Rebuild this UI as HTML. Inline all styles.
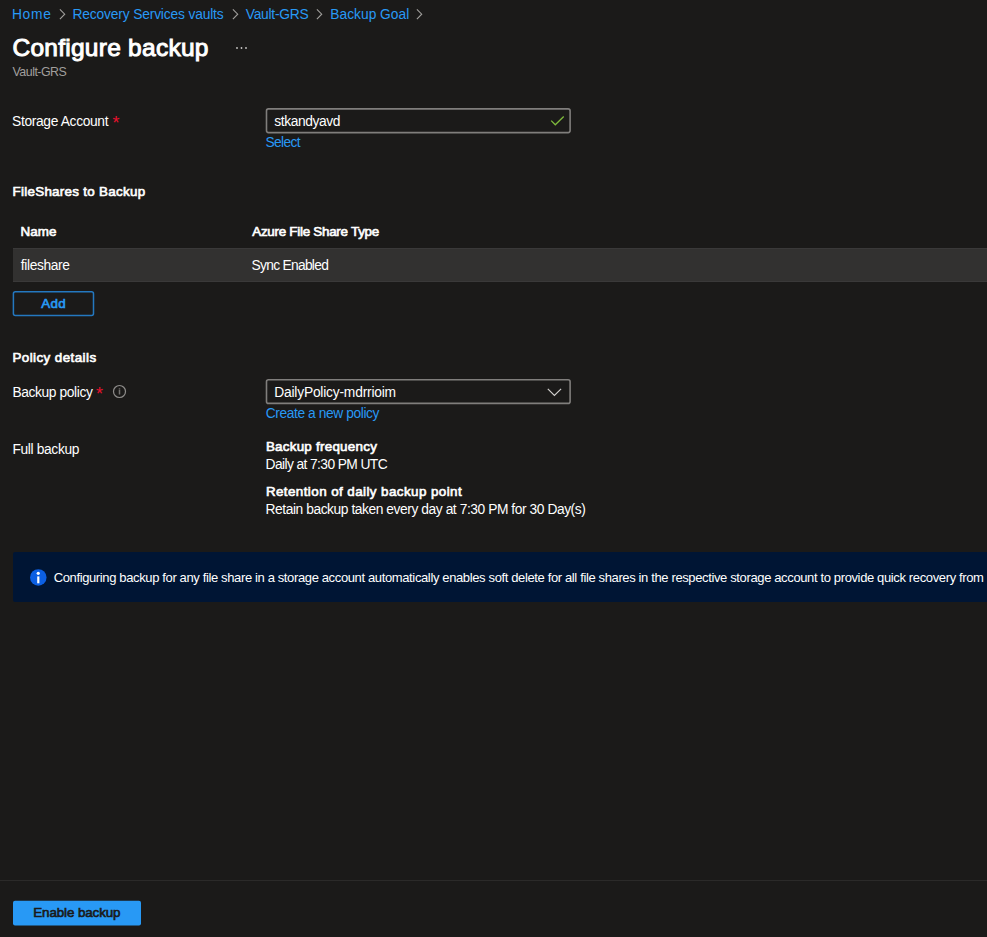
<!DOCTYPE html>
<html lang="en">
<head>
<meta charset="utf-8">
<title>Configure backup</title>
<style>
html,body{margin:0;padding:0}
body{width:987px;height:937px;overflow:hidden;background:#1b1a19;position:relative;font-family:"Liberation Sans",Arial,sans-serif;color:#fff}
.t{position:absolute;margin:0;padding:0;line-height:20px;white-space:nowrap;text-decoration:none;display:block}
.chev{position:absolute;top:7.5px}
.req{position:absolute;color:#e8112d;font-size:18px;line-height:20px}
#row{position:absolute;box-sizing:border-box;left:13px;top:248px;width:974px;height:34px;background:#323130;border-top:1px solid #3a3939;border-bottom:1px solid #3a3939}
#infobar{position:absolute;left:13px;top:551.8px;width:974px;height:50.2px;background:#001534;border-radius:2px 0 0 2px;overflow:hidden}
#footline{position:absolute;left:0;top:880px;width:987px;height:1px;background:#2b2a29}
svg{position:absolute;overflow:visible}
#bc1{left:11.93px;top:5px;font-size:13.8px;font-weight:400;color:#2899f5;letter-spacing:0.706px}
#bc2{left:72.56px;top:5px;font-size:13.8px;font-weight:400;color:#2899f5;letter-spacing:-0.166px}
#bc3{left:245.70px;top:5px;font-size:13.8px;font-weight:400;color:#2899f5;letter-spacing:-0.240px}
#bc4{left:330.37px;top:5px;font-size:13.8px;font-weight:400;color:#2899f5;letter-spacing:-0.016px}
#title{left:12.43px;top:38px;font-size:24.5px;font-weight:400;-webkit-text-stroke:1.0px #ffffff;color:#ffffff;letter-spacing:0.265px}
#sub{left:12.53px;top:62px;font-size:12.4px;font-weight:400;color:#a19f9d;letter-spacing:-0.503px}
#l_sa{left:12.12px;top:112px;font-size:13.8px;font-weight:400;color:#ffffff;letter-spacing:-0.347px}
#v_sa{left:274.34px;top:112px;font-size:13.8px;font-weight:400;color:#ffffff;letter-spacing:-0.415px}
#a_sel{left:265.44px;top:133px;font-size:13.8px;font-weight:400;color:#2899f5;letter-spacing:-0.655px}
#h_fs{left:12.48px;top:182px;font-size:13.4px;font-weight:400;-webkit-text-stroke:0.65px #ffffff;color:#ffffff;letter-spacing:0.283px}
#th1{left:20.49px;top:222px;font-size:13.4px;font-weight:400;-webkit-text-stroke:0.65px #ffffff;color:#ffffff;letter-spacing:0.111px}
#th2{left:252.27px;top:222px;font-size:13.4px;font-weight:400;-webkit-text-stroke:0.65px #ffffff;color:#ffffff;letter-spacing:-0.266px}
#td1{left:20.84px;top:256px;font-size:13.8px;font-weight:400;color:#ffffff;letter-spacing:-0.373px}
#td2{left:251.61px;top:256px;font-size:13.8px;font-weight:400;color:#ffffff;letter-spacing:-0.720px}
#b_add{left:41.17px;top:294px;font-size:13.4px;font-weight:400;-webkit-text-stroke:0.65px #2899f5;color:#2899f5;letter-spacing:0.299px}
#h_pd{left:12.50px;top:348px;font-size:13.4px;font-weight:400;-webkit-text-stroke:0.65px #ffffff;color:#ffffff;letter-spacing:0.418px}
#l_bp{left:12.38px;top:383px;font-size:13.8px;font-weight:400;color:#ffffff;letter-spacing:-0.389px}
#v_bp{left:274.24px;top:383px;font-size:13.8px;font-weight:400;color:#ffffff;letter-spacing:-0.202px}
#a_cnp{left:265.84px;top:404px;font-size:13.8px;font-weight:400;color:#2899f5;letter-spacing:-0.422px}
#l_fb{left:12.38px;top:440px;font-size:13.8px;font-weight:400;color:#ffffff;letter-spacing:-0.350px}
#h_bf{left:265.88px;top:437px;font-size:13.4px;font-weight:400;-webkit-text-stroke:0.65px #ffffff;color:#ffffff;letter-spacing:0.252px}
#v_bf{left:265.54px;top:455px;font-size:13.8px;font-weight:400;color:#ffffff;letter-spacing:-0.594px}
#h_rt{left:265.88px;top:482px;font-size:13.4px;font-weight:400;-webkit-text-stroke:0.65px #ffffff;color:#ffffff;letter-spacing:0.422px}
#v_rt{left:265.54px;top:500px;font-size:13.8px;font-weight:400;color:#ffffff;letter-spacing:-0.439px}
#info{left:53.65px;top:568px;font-size:13.0px;font-weight:400;color:#ffffff;letter-spacing:-0.368px}
#b_en{left:33.30px;top:903px;font-size:13.4px;font-weight:400;-webkit-text-stroke:0.65px #1b1a19;color:#1b1a19;letter-spacing:-0.113px}
</style>
</head>
<body>
<nav aria-label="breadcrumb">
<a id="bc1" class="t" href="#">Home</a><svg class="chev" style="left:57.5px" width="9" height="13" viewBox="0 0 9 13"><path d="M1.9 1.3 L6.7 6.2 L1.9 11.1" fill="none" stroke="#a19f9d" stroke-width="1.1"/></svg>
<a id="bc2" class="t" href="#">Recovery Services vaults</a><svg class="chev" style="left:230.5px" width="9" height="13" viewBox="0 0 9 13"><path d="M1.9 1.3 L6.7 6.2 L1.9 11.1" fill="none" stroke="#a19f9d" stroke-width="1.1"/></svg>
<a id="bc3" class="t" href="#">Vault-GRS</a><svg class="chev" style="left:314.5px" width="9" height="13" viewBox="0 0 9 13"><path d="M1.9 1.3 L6.7 6.2 L1.9 11.1" fill="none" stroke="#a19f9d" stroke-width="1.1"/></svg>
<a id="bc4" class="t" href="#">Backup Goal</a><svg class="chev" style="left:415px" width="9" height="13" viewBox="0 0 9 13"><path d="M1.9 1.3 L6.7 6.2 L1.9 11.1" fill="none" stroke="#a19f9d" stroke-width="1.1"/></svg>
</nav>
<header>
<h1 id="title" class="t">Configure backup</h1>
<svg style="left:234px;top:45px" width="16" height="6" viewBox="0 0 16 6"><circle cx="3" cy="3" r="0.9" fill="#c8c6c4"/><circle cx="7.5" cy="3" r="0.9" fill="#c8c6c4"/><circle cx="12" cy="3" r="0.9" fill="#c8c6c4"/></svg>
<div id="sub" class="t">Vault-GRS</div>
</header>
<main>
<section>
<label id="l_sa" class="t">Storage Account</label><span class="req" style="left:112.4px;top:113px">*</span>
<svg class="field" style="left:264px;top:106px" width="309" height="29" viewBox="0 0 309 29"><rect x="2.50" y="2.90" width="303.60" height="23.70" rx="2" ry="2" fill="none" stroke="#807e7c" stroke-width="1.6"/></svg>
<span id="v_sa" class="t">stkandyavd</span>
<svg style="left:549px;top:114px" width="17" height="13" viewBox="0 0 17 13"><path d="M2.2 6.6 L6.3 10.8 L14.7 2.5" fill="none" stroke="#7fba3c" stroke-width="1.3"/></svg>
<a id="a_sel" class="t" href="#">Select</a>
</section>
<section>
<h2 id="h_fs" class="t">FileShares to Backup</h2>
<div id="th1" class="t">Name</div><div id="th2" class="t">Azure File Share Type</div>
<div id="row"></div>
<div id="td1" class="t">fileshare</div><div id="td2" class="t">Sync Enabled</div>
<svg class="btn" style="left:11px;top:289px" width="85" height="29" viewBox="0 0 85 29"><rect x="2.40" y="2.80" width="80.10" height="23.60" rx="2" ry="2" fill="none" stroke="#2478c0" stroke-width="1.5"/></svg><span id="b_add" class="t">Add</span>
</section>
<section>
<h2 id="h_pd" class="t">Policy details</h2>
<label id="l_bp" class="t">Backup policy</label><span class="req" style="left:95.9px;top:384px">*</span>
<svg style="left:111.6px;top:384.4px" width="15" height="15" viewBox="0 0 15 15"><circle cx="7.5" cy="7.5" r="6" fill="none" stroke="#8f8d8b" stroke-width="1.2"/><rect x="6.75" y="5.9" width="1.5" height="4.6" fill="#757371"/><rect x="6.75" y="4.3" width="1.5" height="1.2" fill="#757371"/></svg>
<svg class="field" style="left:264px;top:377px" width="309" height="29" viewBox="0 0 309 29"><rect x="2.50" y="2.70" width="303.60" height="23.70" rx="2" ry="2" fill="none" stroke="#807e7c" stroke-width="1.6"/></svg>
<span id="v_bp" class="t">DailyPolicy-mdrrioim</span>
<svg style="left:546px;top:386px" width="17" height="12" viewBox="0 0 17 12"><path d="M1.8 2.9 L8.4 9.4 L15.1 2.9" fill="none" stroke="#d2d0ce" stroke-width="1.2"/></svg>
<a id="a_cnp" class="t" href="#">Create a new policy</a>
<label id="l_fb" class="t">Full backup</label>
<div id="h_bf" class="t">Backup frequency</div><div id="v_bf" class="t">Daily at 7:30 PM UTC</div><div id="h_rt" class="t">Retention of daily backup point</div><div id="v_rt" class="t">Retain backup taken every day at 7:30 PM for 30 Day(s)</div>
</section>
<div id="infobar"></div>
<svg style="left:29.6px;top:568.8px" width="17" height="17" viewBox="0 0 17 17"><circle cx="8.3" cy="8.4" r="8.25" fill="#0c5fe2"/><rect x="7.2" y="7.4" width="2.2" height="6.9" fill="#fff"/><circle cx="8.25" cy="4.3" r="1.6" fill="#fff"/></svg>
<span id="info" class="t">Configuring backup for any file share in a storage account automatically enables soft delete for all file shares in the respective storage account to provide quick recovery from</span>
</main>
<footer>
<div id="footline"></div>
<svg class="btn" style="left:11px;top:898px" width="133" height="30" viewBox="0 0 133 30"><rect x="2.00" y="2.80" width="128.00" height="24.70" rx="2" ry="2" fill="#2899f5" stroke="none" stroke-width="0"/></svg><span id="b_en" class="t">Enable backup</span>
</footer>
</body>
</html>
